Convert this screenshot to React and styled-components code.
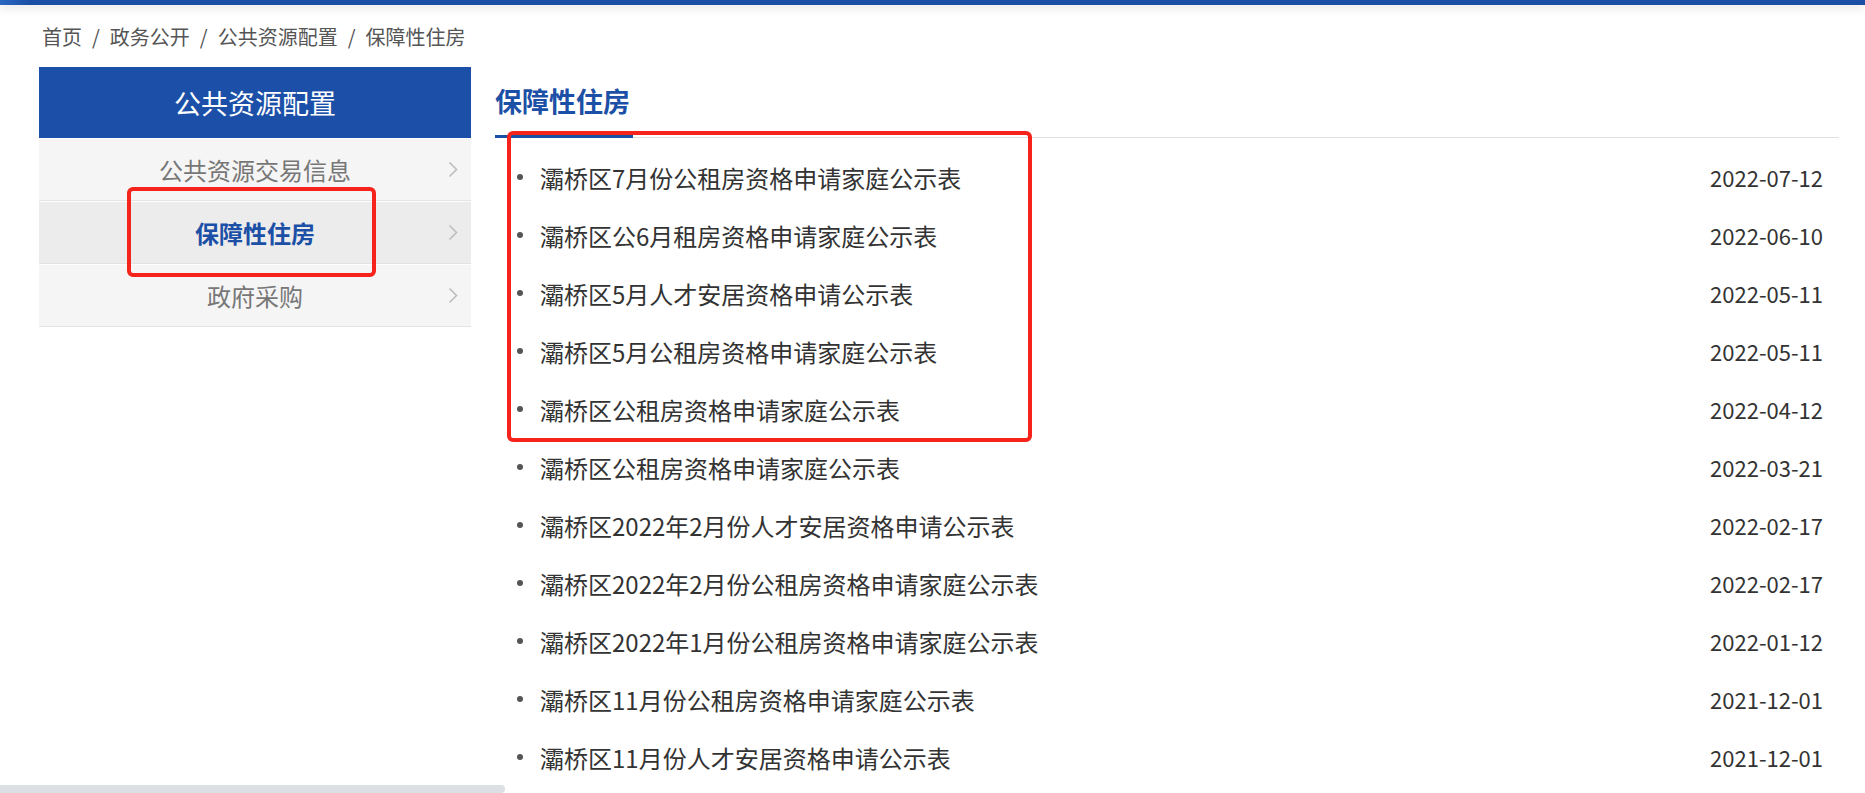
import React from 'react'
import styled, { createGlobalStyle } from 'styled-components';

const items = [
  { title: "灞桥区7月份公租房资格申请家庭公示表", date: "2022-07-12" },
  { title: "灞桥区公6月租房资格申请家庭公示表", date: "2022-06-10" },
  { title: "灞桥区5月人才安居资格申请公示表", date: "2022-05-11" },
  { title: "灞桥区5月公租房资格申请家庭公示表", date: "2022-05-11" },
  { title: "灞桥区公租房资格申请家庭公示表", date: "2022-04-12" },
  { title: "灞桥区公租房资格申请家庭公示表", date: "2022-03-21" },
  { title: "灞桥区2022年2月份人才安居资格申请公示表", date: "2022-02-17" },
  { title: "灞桥区2022年2月份公租房资格申请家庭公示表", date: "2022-02-17" },
  { title: "灞桥区2022年1月份公租房资格申请家庭公示表", date: "2022-01-12" },
  { title: "灞桥区11月份公租房资格申请家庭公示表", date: "2021-12-01" },
  { title: "灞桥区11月份人才安居资格申请公示表", date: "2021-12-01" },
];

const menu = [
  { name: "公共资源交易信息" },
  { name: "保障性住房", active: true },
  { name: "政府采购" },
];

function Chevron() {
  return (
    <svg width="10" height="17" viewBox="0 0 10 17">
      <path d="M1.5 1.5 L8.5 8.5 L1.5 15.5" fill="none" stroke="#bdbdbd" strokeWidth="1.6" />
    </svg>
  )
}

function App() {
  const crumbs = ["首页", "政务公开", "公共资源配置", "保障性住房"];
  return (
    <Wrapper>
      <GlobalStyle />
      <TopBar />
      <Page>
        <Breadcrumb>
          {crumbs.map((c, i) => (
            <React.Fragment key={c}>
              {i > 0 && <Sep>/</Sep>}
              <span>{c}</span>
            </React.Fragment>
          ))}
        </Breadcrumb>
        <Layout>
          <Sidebar>
            <SideHeader>公共资源配置</SideHeader>
            {menu.map(m => (
              <MenuItem key={m.name} $active={m.active}>
                <span />
                <span>{m.name}</span>
                <Arrow><Chevron /></Arrow>
              </MenuItem>
            ))}
          </Sidebar>
          <Main>
            <TitleBar>
              <Title>保障性住房</Title>
            </TitleBar>
            <List>
              {items.map((it, i) => (
                <Row key={i}>
                  <ItemTitle>{it.title}</ItemTitle>
                  <ItemDate>{it.date}</ItemDate>
                </Row>
              ))}
            </List>
          </Main>
        </Layout>
      </Page>
      <Mark style={{ left: 127, top: 187, width: 249, height: 90 }} />
      <Mark style={{ left: 507, top: 131, width: 525, height: 311 }} />
      <ScrollThumb />
    </Wrapper>
  )
}
export default App


const GlobalStyle = createGlobalStyle`
  html, body {
    margin: 0;
    padding: 0;
    background: #fff;
    overflow: hidden;
    font-family: "Noto Sans CJK SC", "Noto Sans", sans-serif;
  }
`;

const Wrapper = styled.div`
  position: relative;
  width: 1865px;
  height: 793px;
  overflow: hidden;
`;

const TopBar = styled.div`
  height: 5px;
  background: linear-gradient(to right, #2b68c2 0, #1b4fa6 30px, #1b4fa6 100%);
  box-shadow: 0 3px 10px rgba(0, 0, 0, 0.13);
`;

const Page = styled.div`
  padding: 0 26px 0 39px;
`;

const Breadcrumb = styled.div`
  height: 62px;
  display: flex;
  align-items: center;
  padding-left: 3px;
  font-size: 20px;
  color: #555;
`;

const Sep = styled.span`
  margin: 0 10px;
`;

const Layout = styled.div`
  display: flex;
  gap: 24px;
`;

const Sidebar = styled.aside`
  width: 432px;
  flex-shrink: 0;
  align-self: flex-start;
`;

const SideHeader = styled.div`
  height: 71px;
  display: flex;
  align-items: center;
  justify-content: center;
  background: #1c50a8;
  color: #fff;
  font-size: 27px;
`;

const MenuItem = styled.div`
  height: 62px;
  display: grid;
  grid-template-columns: 1fr auto 1fr;
  align-items: center;
  background: ${p => p.$active ? '#ececec' : '#f5f5f5'};
  border-bottom: 1px solid #e3e3e3;
  box-shadow: inset 0 1px 0 #fdfdfd;
  font-size: 24px;
  color: ${p => p.$active ? '#1c4fa6' : '#777'};
  font-weight: ${p => p.$active ? 700 : 400};
  cursor: pointer;
`;

const Arrow = styled.span`
  justify-self: end;
  margin-right: 13px;
  display: flex;
`;

const Main = styled.main`
  flex: 1;
`;

const TitleBar = styled.div`
  border-bottom: 1px solid #e0e0e0;
`;

const Title = styled.h2`
  display: inline-block;
  margin: 0 0 -1px 0;
  padding: 12px 3px 12px 0;
  line-height: 44px;
  font-size: 27px;
  font-weight: 700;
  color: #1c4fa6;
  border-bottom: 3px solid #1c4fa6;
`;

const List = styled.ul`
  list-style: none;
  margin: 0;
  padding: 10px 0 0 0;
`;

const Row = styled.li`
  height: 58px;
  display: flex;
  align-items: center;
  justify-content: space-between;
  padding: 0 16px 0 22px;

  &::before {
    content: "";
    width: 6px;
    height: 6px;
    border-radius: 50%;
    background: #555;
    margin-right: 17px;
    flex-shrink: 0;
  }
`;

const ItemTitle = styled.span`
  flex: 1;
  font-size: 24px;
  color: #333;
  white-space: nowrap;
`;

const ItemDate = styled.span`
  font-size: 22px;
  color: #333;
`;

const Mark = styled.div`
  position: absolute;
  box-sizing: border-box;
  border: 4px solid #f5231b;
  border-radius: 6px;
  pointer-events: none;
`;

const ScrollThumb = styled.div`
  position: absolute;
  left: 0;
  bottom: 0;
  width: 505px;
  height: 8px;
  background: #dcdfe3;
  border-radius: 0 5px 5px 0;
`;
